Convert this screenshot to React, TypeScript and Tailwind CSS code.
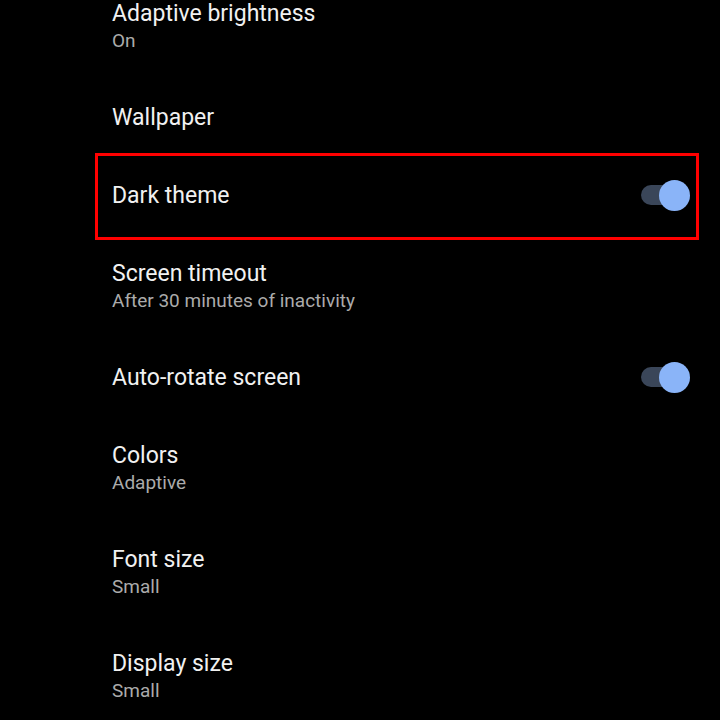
const rows = [
  { title: "Adaptive brightness", sub: "On" },
  { title: "Wallpaper" },
  { title: "Dark theme", toggle: true, marked: true },
  { title: "Screen timeout", sub: "After 30 minutes of inactivity" },
  { title: "Auto-rotate screen", toggle: true },
  { title: "Colors", sub: "Adaptive" },
  { title: "Font size", sub: "Small" },
  { title: "Display size", sub: "Small" },
];

const Toggle = () => (
  <div className="relative w-[49px] h-[31px] flex items-center">
    <div className="w-[44px] h-[20px] rounded-full bg-[#3a4659]" />
    <div className="absolute right-0 top-0 w-[31px] h-[31px] rounded-full bg-[#8ab4f8]" />
  </div>
);

export default function App() {
  return (
    <div
      className="w-[720px] h-[720px] bg-black overflow-hidden"
      style={{ fontFamily: "Roboto, 'Noto Sans', sans-serif" }}
    >
      <div className="-mt-[26px]">
        {rows.map((row) => (
          <div
            key={row.title}
            className={`relative flex pl-[112px] pr-[30px] ${
              row.sub ? "h-[104px] items-start pt-[26px]" : "h-[78px] items-center"
            }`}
          >
            {/* Highlight box */}
            {row.marked && (
              <div className="absolute left-[95px] right-[21px] -top-[3px] -bottom-[6px] border-[3.5px] border-[#ff0000]" />
            )}
            <div className={`flex-1 ${row.sub ? "" : "pt-[2px]"}`}>
              <div className="text-[23px] leading-[28px] text-[#f1f1f1]">{row.title}</div>
              {row.sub && (
                <div className="text-[19px] leading-[24px] mt-[1px] text-[#ababab]">{row.sub}</div>
              )}
            </div>
            {row.toggle && <Toggle />}
          </div>
        ))}
      </div>
    </div>
  );
}
